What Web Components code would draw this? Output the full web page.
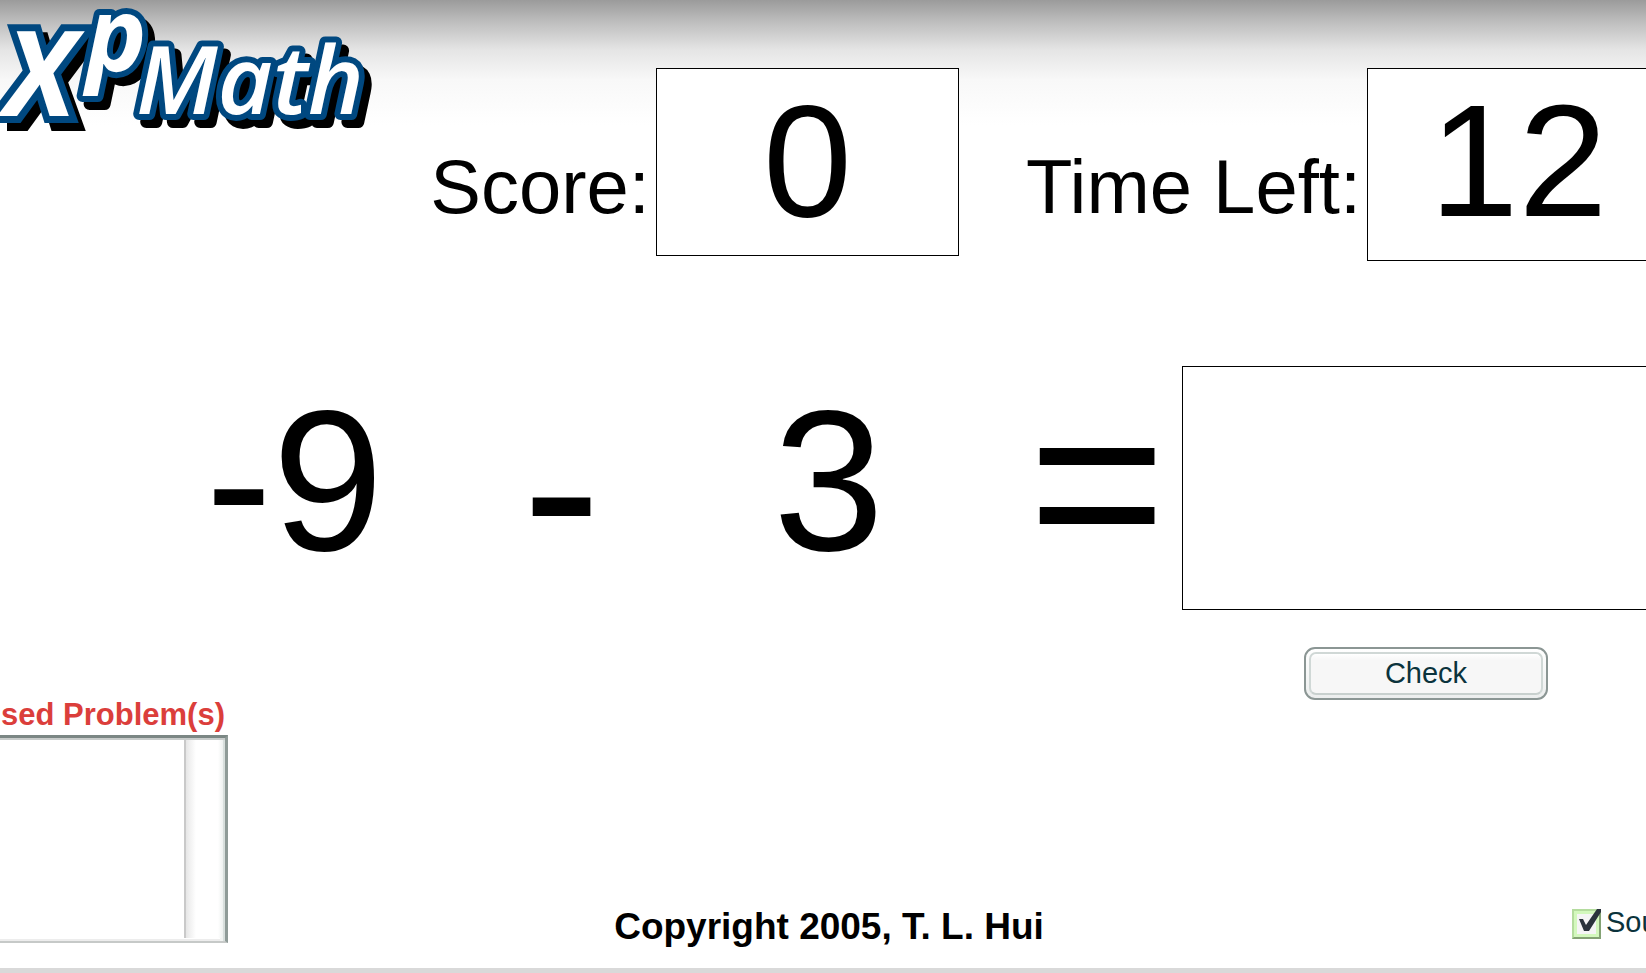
<!DOCTYPE html>
<html lang="en">
<head>
<meta charset="utf-8">
<meta name="viewport" content="width=device-width, initial-scale=1">
<title>XP Math</title>
<style>
  html, body { margin: 0; background: #fff; }
  body { overflow: hidden; font-family: "Liberation Sans", Arial, sans-serif; color: #000; }
</style>
</head>
<body>
<math-game></math-game>
<script>
const define = (name, html, setup) => {
  const template = document.createElement('template');
  template.innerHTML = html;
  customElements.define(name, class extends HTMLElement {
    connectedCallback() {
      if (this.shadowRoot) return;
      this.attachShadow({ mode: 'open' }).append(template.content.cloneNode(true));
      if (setup) setup(this, this.shadowRoot);
    }
  });
};

define('xp-logo', `
<style>
  :host { display: block; }
  svg { display: block; width: 400px; height: 140px; filter: drop-shadow(7px 8px 0 #000); }
  text { fill: #fff; stroke: #004880; stroke-width: 12px; stroke-linejoin: round; paint-order: stroke;
         font-family: "Open Sans", "Noto Sans", sans-serif; font-style: italic; }
  .x { font-size: 118px; font-weight: 700; stroke-width: 14px; stroke-linejoin: miter; }
  .p { font-size: 102px; font-weight: 700; }
  .math { font-size: 95px; font-weight: 600; }
</style>
<svg viewBox="0 0 400 140" role="img" aria-label="XP Math">
  <text class="x" x="4" y="116">X</text>
  <text class="p" x="86" y="71">p</text>
  <text class="math" x="136" y="114">Math</text>
</svg>`);

define('score-field', `
<style>
  :host { display: flex; align-items: flex-start; gap: 6px; }
  label { padding-top: 75px; font-size: 76px; line-height: 88px; white-space: nowrap; }
  output { box-sizing: border-box; width: 303px; min-height: var(--field-height, 188px); border: 1px solid #000;
           background: #fff; text-align: center; font-size: 160px; line-height: 184px; }
</style>
<label for="value"></label><output id="value"><slot></slot></output>`,
  (host, root) => { root.querySelector('label').textContent = host.getAttribute('label'); });

define('equation-row', `
<style>
  :host { display: grid; grid-template-columns: 161fr 267fr 267fr 267fr 220fr 488fr; }
  span { text-align: center; white-space: nowrap; font-size: 200px; line-height: 230px; }
  .first { grid-column: 2; }
  .sign { font-size: 236px; line-height: 242px; height: 244px; }
  .equals { line-height: 232px; text-align: right; padding-right: 16px; }
  input { box-sizing: border-box; min-width: 0; width: 100%; height: 244px; margin: 0; padding: 0 24px; border: 1px solid #000;
          border-radius: 0; background: #fff; font: 200px "Liberation Sans", Arial, sans-serif; outline: none; }
</style>
<span class="first"><slot name="left"></slot></span>
<span class="sign"><slot name="operator"></slot></span>
<span><slot name="right"></slot></span>
<span class="sign equals">=</span>
<input type="text" inputmode="numeric" aria-label="Answer">`);

define('check-button', `
<style>
  :host { display: block; }
  button { display: block; box-sizing: border-box; width: 244px; height: 53px; margin: 0; padding: 3px; border: 2px solid #8b9694;
           border-radius: 11px; background: linear-gradient(#fff, #eceeee); color: #0b333c;
           font: 29px "Liberation Sans", Arial, sans-serif; }
  span { display: block; box-sizing: border-box; height: 43px; border: 2px solid #d0d8d6; border-bottom-color: #c8d0ce; border-radius: 7px;
         background: linear-gradient(#fff, #f7f7f7 6px); line-height: 38px; }
</style>
<button type="button"><span><slot></slot></span></button>`);

define('missed-list', `
<style>
  :host { display: block; }
  h2 { margin: 0 0 6px; font-size: 31px; line-height: 29px; font-weight: 700; color: #db3e3b; text-align: right; white-space: nowrap; padding-right: 3px; }
  .box { box-sizing: border-box; display: flex; justify-content: flex-end; height: 208px; background: #fff;
         border-top: 3px solid #7b8784; border-right: 3px solid #8f9b98; border-bottom: 2px solid #c6c9c8;
         box-shadow: inset 0 2px #c8cccb, inset -2px 0 #d8dfdd, inset -5px 0 #f1f3f2, inset 0 -2px #ededed; }
  .track { width: 37px; margin: 2px 2px 3px 0; border-left: 2px solid #c9c9c9; background: linear-gradient(90deg, #e6e6e6, #f1f1f1 4px, #fff 10px, #fff 32px, #eef1f0); }
</style>
<h2><slot></slot></h2>
<div class="box" role="list"><div class="track"></div></div>`);

define('sound-toggle', `
<style>
  :host { display: block; color: #0b333c; font-size: 29px; line-height: 34px; }
  label { display: flex; align-items: flex-end; gap: 5px; white-space: nowrap; }
  .mark { display: grid; }
  .mark > * { grid-area: 1 / 1; }
  input { appearance: none; box-sizing: border-box; width: 29px; height: 30px; margin: 0; border: 2px solid; border-color: #b4dc9e #84a274 #84a274 #b4dc9e;
          background: #f5f5f5; box-shadow: inset 0 0 0 3px #d3f8bd; }
  svg { width: 29px; height: 30px; pointer-events: none; visibility: hidden; }
  input:checked + svg { visibility: visible; }
</style>
<label><span class="mark"><input type="checkbox" checked><svg viewBox="0 0 29 30" aria-hidden="true"><path d="M7 10h4l3 6L25 0h4v3L17 22h-5z" fill="#2b333c"/></svg></span><slot></slot></label>`);

define('math-game', `
<style>
  :host { display: flex; flex-direction: column; box-sizing: border-box; min-height: 100vh; width: calc(100% + 24px);
          border-bottom: 5px solid #d9d9d9; background: linear-gradient(#9b9b9b, #bebebe 22px, #e5e5e5 50px, #f8f8f8 80px, #fff 125px); }
  header { display: flex; align-items: flex-start; height: 298px; padding-top: 68px; gap: 67px; }
  xp-logo { flex: 1; margin-top: -68px; min-width: 0; }
  .time { --field-height: 193px; }
  .actions { display: grid; grid-template-columns: 1182fr 488fr; justify-items: center; margin-top: 37px; }
  check-button { grid-column: 2; }
  footer { display: grid; grid-template-columns: 282px 1fr 240px; align-items: end; margin-left: -54px; margin-top: auto; padding-bottom: 25px; }
  p { margin: 0; font-size: 37px; line-height: 32px; font-weight: 700; white-space: nowrap; text-align: center; }
  sound-toggle { padding: 0 0 4px 142px; }
</style>
<header>
  <xp-logo></xp-logo>
  <score-field label="Score:">0</score-field>
  <score-field class="time" label="Time Left:">12</score-field>
</header>
<equation-row><span slot="left">-9</span><span slot="operator">-</span><span slot="right">3</span></equation-row>
<div class="actions"><check-button>Check</check-button></div>
<footer>
  <missed-list>Missed Problem(s)</missed-list>
  <p>Copyright 2005, T. L. Hui</p>
  <sound-toggle>Sound</sound-toggle>
</footer>`);
</script>
</body>
</html>
